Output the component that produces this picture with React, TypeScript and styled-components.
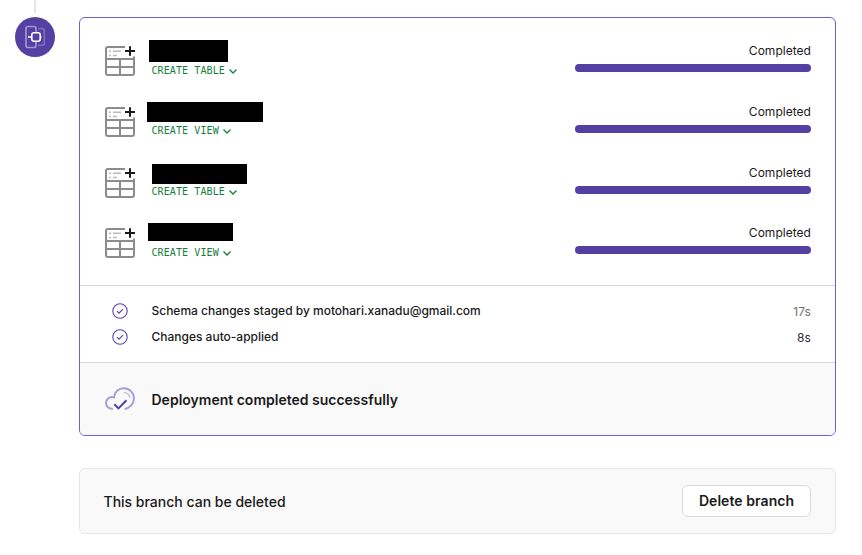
import React from "react";
import styled, { createGlobalStyle } from "styled-components";

const GlobalStyle = createGlobalStyle`
  * { box-sizing: border-box; }
  body {
    margin: 0;
    background: #fff;
    color: #1a1a1a;
    font-family: Inter, "Liberation Sans", sans-serif;
    -webkit-font-smoothing: antialiased;
  }
`;

const Page = styled.main`
  display: grid;
  grid-template-columns: 40px 757px;
  column-gap: 24px;
  width: 862px;
  height: 555px;
  padding-left: 15px;
  overflow: hidden;
`;

const Timeline = styled.div`
  display: flex;
  flex-direction: column;
  align-items: center;
`;

const Connector = styled.div`
  width: 2px;
  height: 13px;
  margin-bottom: 4px;
  background: #e6e6e6;
`;

const Badge = styled.div`
  width: 40px;
  height: 40px;
  border-radius: 50%;
  background: #543fa3;
  svg { display: block; }
`;

const Content = styled.div`
  display: flex;
  flex-direction: column;
  gap: 32px;
  padding-top: 17px;
`;

const Card = styled.section`
  height: 419px;
  border: 1px solid #7659e0;
  border-radius: 6px;
  overflow: hidden;
`;

const Changes = styled.div`
  display: grid;
  grid-template-rows: 61px 61px 60px 60px;
  height: 268px;
  padding: 22px 24px 0 25px;
  border-bottom: 1px solid #d9d9d9;
`;

const ChangeRow = styled.div`
  display: grid;
  grid-template-columns: 42px 1fr 236px;
`;

const TableSvg = styled.svg`
  display: block;
  width: 30px;
  height: 30px;
  margin-top: 6px;
`;

const Details = styled.div`
  display: flex;
  flex-direction: column;
`;

const Name = styled.div<{ $x: number; $y: number; $w: number; $h: number }>`
  width: ${(p) => p.$w}px;
  height: ${(p) => p.$h}px;
  margin: ${(p) => `${p.$y}px 0 ${24 - p.$y - p.$h}px ${p.$x}px`};
  background: #000;
`;

const Operation = styled.div<{ $shift: number }>`
  display: flex;
  align-items: center;
  gap: 3px;
  height: 12px;
  margin: ${(p) => p.$shift}px 0 0 4.5px;
  color: #128039;
  font: 10px/12px "DejaVu Sans Mono", monospace;
  letter-spacing: 0.1px;
`;

const Progress = styled.div`
  font-size: 12px;
  line-height: 16px;
  letter-spacing: 0.03px;
  text-align: right;
  padding-top: 3px;
`;

const Bar = styled.div`
  height: 8px;
  margin-top: 5px;
  border-radius: 4px;
  background: #543fa3;
`;

const Steps = styled.div`
  height: 77px;
  padding: 12px 24px 0 32px;
  border-bottom: 1px solid #d9d9d9;
`;

const Step = styled.div<{ $muted?: boolean }>`
  display: grid;
  grid-template-columns: 39.5px 1fr auto;
  align-items: center;
  height: 26px;
  font-size: 12px;
  font-weight: 500;
  letter-spacing: -0.01px;
  span { padding-bottom: 2px; }
  time {
    color: ${(p) => (p.$muted ? "#707070" : "#303030")};
    font-weight: 400;
    letter-spacing: 0.1px;
  }
  svg { display: block; }
`;

const Result = styled.div`
  display: grid;
  grid-template-columns: 46.5px 1fr;
  align-items: center;
  height: 72px;
  padding: 0 24px 0 25px;
  background: #f9f9f9;
  font-size: 14px;
  font-weight: 600;
  svg { display: block; }
`;

const BranchPanel = styled.section`
  display: flex;
  align-items: center;
  justify-content: space-between;
  height: 66px;
  padding: 0 24px 0 23.5px;
  border: 1px solid #e6e6e6;
  border-radius: 6px;
  background: #f9f9f9;
  font-size: 14px;
  font-weight: 500;
`;

const Button = styled.button`
  width: 129px;
  height: 32px;
  padding: 0;
  border: 1px solid #d9d9d9;
  border-radius: 6px;
  background: #fff;
  color: #1a1a1a;
  font: 600 14px/20px Inter, sans-serif;
  letter-spacing: 0.06px;
`;

const TableIcon = () => (
  <TableSvg viewBox="0 0 30 30" fill="none">
    <path d="M20 1H3a2 2 0 0 0-2 2v24a2 2 0 0 0 2 2h24a2 2 0 0 0 2-2V10.5M1 13h28M1 21h28M15 13v16" stroke="#8c8c8c" strokeWidth="2" />
    <path d="M4 5.2h2M8 5.2h8M4 9.6h2M8 9.6h4" stroke="#bababa" strokeWidth="1.5" />
    <path d="M25 0.3v9.5M20 5h10" stroke="#1a1a1a" strokeWidth="2" />
  </TableSvg>
);

const Chevron = () => (
  <svg width="10" height="10" viewBox="0 0 10 10" fill="none">
    <path d="m1.5 3.5 3.5 3.5L8.5 3.5" stroke="currentColor" strokeWidth="1.3" />
  </svg>
);

const DeployIcon = () => (
  <svg width="40" height="40" viewBox="0 0 40 40" fill="none">
    <path d="M21 15V11.5a2 2 0 0 0-2-2h-6a2 2 0 0 0-2 2v17a2 2 0 0 0 2 2h6a2 2 0 0 0 2-2V25" stroke="#a196cf" strokeWidth="1.7" />
    <path d="M23 11.7h4.3a2 2 0 0 1 2 2v12.6a2 2 0 0 1-2 2H23" stroke="#7c6cba" strokeWidth="1.7" />
    <rect x="16.8" y="15.8" width="8.4" height="8.4" rx="2.2" stroke="#fff" strokeWidth="1.6" />
    <path d="M13 20h3.8M25.2 20h1.3" stroke="#fff" strokeWidth="1.5" />
  </svg>
);

const CheckIcon = () => (
  <svg width="16" height="16" viewBox="0 0 16 16" fill="none" stroke="#5944ab">
    <circle cx="8" cy="8" r="7.2" strokeWidth="1.1" />
    <path d="m5 8.1 2 2 4-4" strokeWidth="1.2" />
  </svg>
);

const CloudIcon = () => (
  <svg width="30" height="24" viewBox="0 0 30 24" fill="none">
    <path d="M8 21.8H6.8A5.9 5.9 0 0 1 7 10c.7 0 1.4.1 2 .3C9.3 5 13.6 1.2 18.8 1.2c5.6 0 10.1 4.5 10.1 10.2 0 5.5-4 9.7-9.3 10.5" stroke="#a99dd3" strokeWidth="2" />
    <path d="M18.5 5.5c3.5 0 6 2.2 6.5 5.5" stroke="#cbc4e5" strokeWidth="1.6" />
    <path d="m9.3 17.2 4.2 4.2 8-8.2" stroke="#543fa3" strokeWidth="2" />
  </svg>
);

const changes = [
  { op: "CREATE TABLE", x: 2, y: 0, w: 79, h: 22, shift: 1 },
  { op: "CREATE VIEW", x: 0, y: 1, w: 116, h: 20, shift: 0 },
  { op: "CREATE TABLE", x: 5, y: 2, w: 95, h: 20, shift: 0 },
  { op: "CREATE VIEW", x: 1, y: 1, w: 85, h: 18, shift: 1 },
];

export default function App() {
  return (
    <>
      <GlobalStyle />
      <Page>
        <Timeline>
          <Connector />
          <Badge><DeployIcon /></Badge>
        </Timeline>
        <Content>
          <Card>
            <Changes>
              {changes.map((c, i) => (
                <ChangeRow key={i}>
                  <TableIcon />
                  <Details>
                    <Name $x={c.x} $y={c.y} $w={c.w} $h={c.h} />
                    <Operation $shift={c.shift}>{c.op}<Chevron /></Operation>
                  </Details>
                  <Progress>Completed<Bar /></Progress>
                </ChangeRow>
              ))}
            </Changes>
            <Steps>
              <Step $muted><CheckIcon /><span>Schema changes staged by motohari.xanadu@gmail.com</span><time>17s</time></Step>
              <Step><CheckIcon /><span>Changes auto-applied</span><time>8s</time></Step>
            </Steps>
            <Result><CloudIcon />Deployment completed successfully</Result>
          </Card>
          <BranchPanel>
            <span>This branch can be deleted</span>
            <Button>Delete branch</Button>
          </BranchPanel>
        </Content>
      </Page>
    </>
  );
}
